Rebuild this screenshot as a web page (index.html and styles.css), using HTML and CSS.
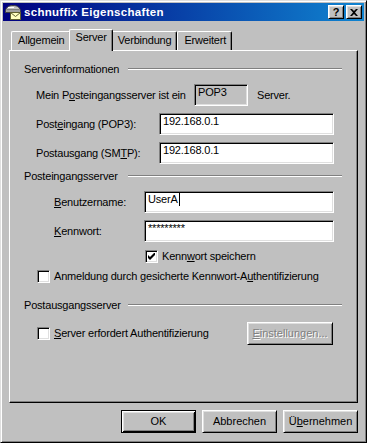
FILE: index.html
```html
<!DOCTYPE html>
<html lang="de">
<head>
    <meta charset="UTF-8">
    <meta name="viewport" content="width=device-width, initial-scale=1.0">
    <title>schnuffix Eigenschaften</title>
    <link rel="stylesheet" href="styles.css">
</head>
<body>
    <div class="window">
        <div class="titlebar">
            <svg class="app-icon" width="16" height="16" viewBox="0 0 16 16">
                <path d="M0.5 8.5 C0.5 3.5 3 1.5 8 1.5 C13 1.5 15.5 3.5 15.5 8.5 Z" fill="#c0c0c0" stroke="#404040"/>
                <path d="M2 5.5 H14 M1.5 7 H14.5" stroke="#808080"/>
                <path d="M3 3.5 H9" stroke="#fff"/>
                <rect x="5.5" y="8.5" width="10" height="7" fill="#ffffc0" stroke="#606030"/>
                <path d="M5.5 8.5 L10.5 12.5 L15.5 8.5" fill="none" stroke="#606030"/>
            </svg>
            <span class="title-text">schnuffix Eigenschaften</span>
            <div class="title-buttons">
                <button class="title-btn help-btn">?</button>
                <button class="title-btn">
                    <svg width="8" height="7" viewBox="0 0 8 7">
                        <path d="M0 0 H2 L4 2 L6 0 H8 L5 3.5 L8 7 H6 L4 5 L2 7 H0 L3 3.5 Z" fill="#000"/>
                    </svg>
                </button>
            </div>
        </div>

        <div class="dialog-body">
            <div class="tabs">
                <div class="tab">Allgemein</div>
                <div class="tab active">Server</div>
                <div class="tab">Verbindung</div>
                <div class="tab">Erweitert</div>
            </div>

            <div class="panel">
                <div class="group-title"><span>Serverinformationen</span><div class="etch"></div></div>

                <div class="server-type">
                    <span class="type-label">Mein P<u>o</u>steingangsserver ist ein</span>
                    <div class="readonly-box">POP3</div>
                    <span class="type-suffix">Server.</span>
                </div>

                <div class="field-row server-row">
                    <span>Post<u>e</u>ingang (POP3):</span>
                    <div class="field">192.168.0.1</div>
                </div>
                <div class="field-row server-row">
                    <span>Postausgang (SM<u>T</u>P):</span>
                    <div class="field">192.168.0.1</div>
                </div>

                <div class="group-title group-incoming"><span>Posteingangsserver</span><div class="etch"></div></div>

                <div class="field-row login-row first-login">
                    <span><u>B</u>enutzername:</span>
                    <div class="field">UserA<span class="caret"></span></div>
                </div>
                <div class="field-row login-row">
                    <span><u>K</u>ennwort:</span>
                    <div class="field password">*********</div>
                </div>

                <div class="check-row remember">
                    <span class="checkbox">
                        <svg width="7" height="7" viewBox="0 0 7 7"><path d="M0 2 L2 4 L6 0 H7 V2 L2 7 L0 5 Z" fill="#000"/></svg>
                    </span>
                    <span>Kenn<u>w</u>ort speichern</span>
                </div>
                <div class="check-row secure">
                    <span class="checkbox"></span>
                    <span>Anmeldung durch gesicherte Kennwort-A<u>u</u>thentifizierung</span>
                </div>

                <div class="group-title group-outgoing"><span>Postausgangsserver</span><div class="etch"></div></div>

                <div class="check-row outgoing">
                    <span class="checkbox"></span>
                    <span><u>S</u>erver erfordert Authentifizierung</span>
                    <button class="btn settings-btn" disabled><u>E</u>instellungen...</button>
                </div>
            </div>

            <div class="button-row">
                <button class="btn btn-default">OK</button>
                <button class="btn">Abbrechen</button>
                <button class="btn">Ü<u>b</u>ernehmen</button>
            </div>
        </div>
    </div>
</body>
</html>
```

FILE: styles.css
```css
html, body {
    margin: 0;
}
body {
    font-family: "Liberation Sans", Arial, sans-serif;
    font-size: 11px;
    line-height: 13px;
    letter-spacing: -0.2px;
    color: #000;
    background: #c0c0c0;
    overflow: hidden;
}
.window {
    width: 367px;
    height: 443px;
    box-sizing: border-box;
    border: 1px solid;
    border-color: #dfdfdf #000 #000 #dfdfdf;
    box-shadow: inset 1px 1px #fff, inset -1px -1px #808080;
    padding: 2px;
    background: #c0c0c0;
    display: flex;
    flex-direction: column;
}

/* title bar */
.titlebar {
    height: 18px;
    display: flex;
    align-items: center;
    padding: 0 2px;
    background: linear-gradient(to right, #000080, #1084d0);
    color: #fff;
}
.app-icon {
    margin-right: 3px;
    flex-shrink: 0;
}
.title-text {
    font-size: 11.5px;
    font-weight: bold;
    letter-spacing: 0.3px;
    flex: 1;
}
.title-buttons {
    display: flex;
    gap: 2px;
}
.title-btn {
    width: 16px;
    height: 14px;
    box-sizing: border-box;
    padding: 0;
    border: 1px solid;
    border-color: #fff #000 #000 #fff;
    box-shadow: inset 1px 1px #dfdfdf, inset -1px -1px #808080;
    background: #c0c0c0;
    display: flex;
    align-items: center;
    justify-content: center;
}
.help-btn {
    font: bold 11px/12px "Liberation Sans", Arial, sans-serif;
    color: #000;
}

/* body + tabs */
.dialog-body {
    flex: 1;
    display: flex;
    flex-direction: column;
    padding: 8px 6px 7px;
}
.tabs {
    display: flex;
    align-items: flex-end;
    height: 21px;
    padding-left: 2px;
}
.tab {
    height: 19px;
    box-sizing: border-box;
    padding: 2px 5px 0 6px;
    border: 1px solid;
    border-bottom: none;
    border-color: #fff #000 #000 #fff;
    border-radius: 2px 2px 0 0;
    box-shadow: inset -1px 0 #808080;
    background: #c0c0c0;
}
.tab.active {
    height: 22px;
    padding-top: 1px;
    margin: 0 -2px -1px;
    position: relative;
    z-index: 1;
}

.panel {
    flex: 1;
    box-sizing: border-box;
    border: 1px solid;
    border-color: #fff #000 #000 #fff;
    box-shadow: inset -1px -1px #808080;
    padding: 12px 15px 0 14px;
}

/* group headings */
.group-title {
    display: grid;
    grid-template-columns: 104px 1fr;
}
.etch {
    margin-top: 5px;
    height: 0;
    border-top: 1px solid #808080;
    border-bottom: 1px solid #fff;
}
.group-incoming {
    margin-top: 6px;
}
.group-outgoing {
    margin-top: 16px;
}

/* server info */
.server-type {
    display: flex;
    align-items: center;
    margin-top: 8px;
    padding-left: 12px;
}
.type-label {
    width: 158px;
}
.readonly-box {
    width: 54px;
    height: 22px;
    box-sizing: border-box;
    border: 1px solid;
    border-color: #808080 #fff #fff #808080;
    box-shadow: inset 1px 1px #000, inset -1px -1px #dfdfdf;
    padding: 1px 2px 0 3px;
}
.type-suffix {
    margin-left: 9px;
}

.field-row {
    display: grid;
    align-items: center;
    margin-top: 7px;
}
.server-row {
    padding-left: 12px;
    grid-template-columns: 123px 175px;
}
.login-row {
    padding-left: 30px;
    grid-template-columns: 90px 190px;
}
.first-login {
    margin-top: 8px;
}
.field {
    height: 22px;
    box-sizing: border-box;
    border: 1px solid;
    border-color: #808080 #fff #fff #808080;
    box-shadow: inset 1px 1px #000, inset -1px -1px #dfdfdf;
    background: #fff;
    padding: 1px 2px 0 3px;
    white-space: nowrap;
    overflow: hidden;
}
.caret {
    display: inline-block;
    width: 1px;
    height: 13px;
    background: #000;
    vertical-align: top;
    margin-left: 1px;
}

/* checkboxes */
.check-row {
    display: flex;
    align-items: center;
    gap: 4px;
}
.remember {
    margin-top: 8px;
    padding-left: 121px;
}
.secure {
    margin-top: 7px;
    padding-left: 13px;
}
.outgoing {
    margin-top: 10px;
    padding-left: 13px;
}
.checkbox {
    width: 13px;
    height: 13px;
    box-sizing: border-box;
    border: 1px solid;
    border-color: #808080 #fff #fff #808080;
    box-shadow: inset 1px 1px #000, inset -1px -1px #dfdfdf;
    background: #fff;
    display: flex;
    align-items: center;
    justify-content: center;
    flex-shrink: 0;
}

/* buttons */
.btn {
    font: inherit;
    color: #000;
    width: 75px;
    height: 23px;
    box-sizing: border-box;
    padding: 0;
    background: #c0c0c0;
    border: 1px solid;
    border-color: #fff #000 #000 #fff;
    box-shadow: inset 1px 1px #dfdfdf, inset -1px -1px #808080;
}
.btn-default {
    border-color: #000;
    box-shadow: inset 1px 1px #fff, inset -1px -1px #000, inset 2px 2px #dfdfdf, inset -2px -2px #808080;
}
.settings-btn {
    width: 86px;
    margin-left: auto;
    margin-right: 9px;
    color: #808080;
    text-shadow: 1px 1px #fff;
}
.button-row {
    display: flex;
    justify-content: flex-end;
    gap: 6px;
    margin-top: 7px;
}
```
